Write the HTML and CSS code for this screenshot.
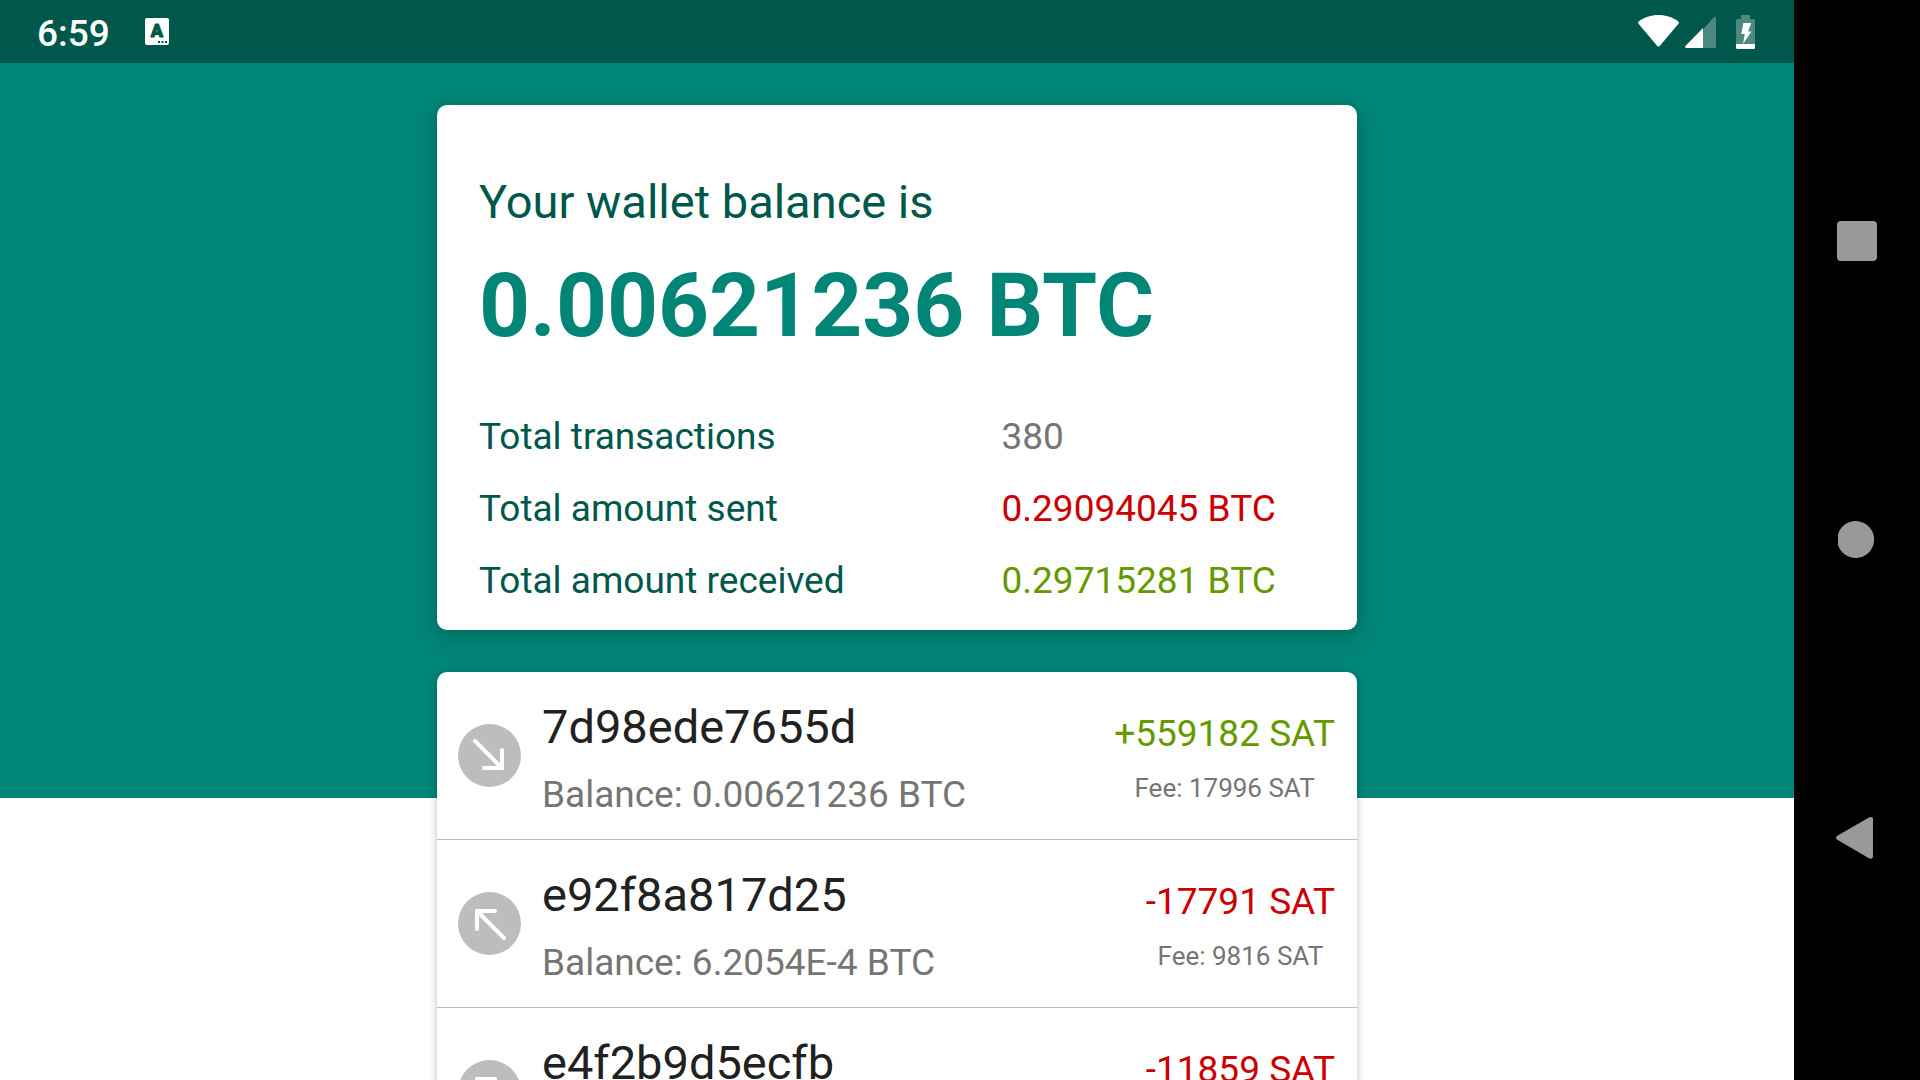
FILE: index.html
```html
<!DOCTYPE html>
<html lang="en">
<head>
<meta charset="utf-8">
<meta name="viewport" content="width=device-width, initial-scale=1">
<title>Wallet</title>
<link rel="stylesheet" href="styles.css">
</head>
<body>
<div class="device">
  <div class="screen">
    <header class="status-bar">
      <time class="clock">6:59</time>
      <svg class="notification" width="24" height="27" viewBox="0 0 24 27" aria-hidden="true">
        <rect width="24" height="27" rx="2" fill="#fff"/>
        <text class="notification-letter" x="12" y="19" text-anchor="middle">A</text>
        <path d="M13 23h2v2h-2zM16.500 23h2v2h-2zM20 23h2v2h-2z" fill="#00574b"/>
      </svg>
      <div class="indicators">
        <svg width="41" height="34" viewBox="0 0 41 34" role="img" aria-label="Wi-Fi">
          <path d="M1 6.200C6 2.500 13 0 20.500 0S35 2.500 40 6.200c1 .7 1.200 1.600.5 2.500L21.700 31c-.7.8-1.700.8-2.400 0L.5 8.700C-.2 7.800 0 6.900 1 6.200z" fill="#fff"/>
        </svg>
        <svg class="signal" width="31" height="34" viewBox="0 0 31 34" role="img" aria-label="Mobile signal">
          <path d="M18 14.500L28.600 2.600c1-1 2.400-.8 2.400.6V32c0 .7-.4 1-1 1H18z" fill="#fff" fill-opacity=".3"/>
          <path d="M18 13v20H1.500C0 33-.4 31.700.6 30.700z" fill="#fff"/>
        </svg>
        <svg width="19" height="34" viewBox="0 0 19 34" role="img" aria-label="Battery charging">
          <path d="M5 0h9v4h3.500c1 0 1.500.6 1.500 1.500V29H0V5.500C0 4.600.6 4 1.500 4H5z" fill="#fff" fill-opacity=".3"/>
          <path d="M0 29h19v3.500c0 .9-.5 1.500-1.500 1.500h-16C.6 34 0 33.400 0 32.500z" fill="#fff"/>
          <path d="M7.300 8h8L12 16.500h3.500L7 29l1.800-10H5.300z" fill="#fff"/>
        </svg>
      </div>
    </header>

    <main class="content">
      <section class="card summary">
        <h1 class="summary-title">Your wallet balance is</h1>
        <p class="summary-balance">0.00621236 BTC</p>
        <dl class="totals">
          <dt>Total transactions</dt>
          <dd>380</dd>
          <dt>Total amount sent</dt>
          <dd class="negative">0.29094045 BTC</dd>
          <dt>Total amount received</dt>
          <dd class="positive">0.29715281 BTC</dd>
        </dl>
      </section>

      <ul class="card transactions">
        <li class="transaction">
          <svg class="direction" width="63" height="63" viewBox="0 0 63 63" role="img" aria-label="Received">
            <circle cx="31.500" cy="31.500" r="31.500"/>
            <path d="M17 17l27 27M26 44h18V26"/>
          </svg>
          <div class="details">
            <h2 class="hash">7d98ede7655d</h2>
            <p class="balance">Balance: 0.00621236 BTC</p>
          </div>
          <div class="amounts">
            <p class="amount positive">+559182 SAT</p>
            <p class="fee">Fee: 17996 SAT</p>
          </div>
        </li>
        <li class="transaction">
          <svg class="direction" width="63" height="63" viewBox="0 0 63 63" role="img" aria-label="Sent">
            <circle cx="31.500" cy="31.500" r="31.500"/>
            <path d="M46 46L19 19M37 19H19v18"/>
          </svg>
          <div class="details">
            <h2 class="hash">e92f8a817d25</h2>
            <p class="balance">Balance: 6.2054E-4 BTC</p>
          </div>
          <div class="amounts">
            <p class="amount negative">-17791 SAT</p>
            <p class="fee">Fee: 9816 SAT</p>
          </div>
        </li>
        <li class="transaction">
          <svg class="direction" width="63" height="63" viewBox="0 0 63 63" role="img" aria-label="Sent">
            <circle cx="31.500" cy="31.500" r="31.500"/>
            <path d="M46 46L19 19M37 19H19v18"/>
          </svg>
          <div class="details">
            <h2 class="hash">e4f2b9d5ecfb</h2>
          </div>
          <div class="amounts">
            <p class="amount negative">-11859 SAT</p>
          </div>
        </li>
      </ul>
    </main>
  </div>

  <nav class="nav-bar" aria-label="System navigation">
    <button type="button" aria-label="Overview">
      <svg width="42" height="42" viewBox="0 0 42 42" aria-hidden="true"><rect x="1" y="1" width="40" height="40" rx="4"/></svg>
    </button>
    <button type="button" aria-label="Home">
      <svg width="42" height="42" viewBox="0 0 42 42" aria-hidden="true"><path d="M2 15A18.500 18.500 0 1 1 2 26z"/></svg>
    </button>
    <button type="button" aria-label="Back">
      <svg width="42" height="42" viewBox="0 0 42 42" aria-hidden="true"><path d="M1.300 17.800L32.500-.3C35-1.500 37-.9 37 1.500v36.500c0 2.500-2 3.400-4.500 2.100L1.300 21.700c-1.800-1.200-1.800-2.700 0-3.900z"/></svg>
    </button>
  </nav>
</div>
</body>
</html>
```
FILE: styles.css
```css
* {
  box-sizing: border-box;
}

body,
h1,
h2,
p,
ul,
dl,
dd {
  margin: 0;
}

body {
  font-family: Roboto, sans-serif;
  font-size: 37px;
  line-height: 43px;
  color: #757575;
  background: #fff;
}

.device {
  display: grid;
  grid-template-columns: minmax(0, 1fr) 126px;
  height: 100vh;
  overflow: hidden;
}

.screen {
  display: flex;
  flex-direction: column;
  min-height: 0;
}

/* Status bar */

.status-bar {
  display: flex;
  flex: none;
  align-items: center;
  height: 63px;
  padding: 0 39px 0 37px;
  color: #fff;
  background: #00574b;
}

.clock {
  padding-top: 3px;
  font-weight: 500;
}

.notification {
  margin-left: 35px;
}

.notification-letter {
  font-size: 18px;
  font-weight: 900;
  fill: #00574b;
  stroke: #00574b;
  stroke-width: 1;
  stroke-linejoin: round;
}

.indicators {
  display: flex;
  margin-left: auto;
}

.signal {
  margin: 0 20px 0 6px;
}

/* Content */

.content {
  display: flex;
  flex: 1;
  flex-direction: column;
  align-items: center;
  gap: 42px;
  min-height: 0;
  padding-top: 42px;
  overflow: hidden;
  background: linear-gradient(#008577, #008577) top / 100% 735px no-repeat;
}

.card {
  flex: none;
  width: 100%;
  max-width: 920px;
  background: #fff;
  border-radius: 10px;
}

.summary {
  padding: 69px 42px 28px;
  box-shadow: 0 8px 22px rgba(0, 0, 0, 0.14), 0 0 14px rgba(0, 0, 0, 0.1);
}

.summary-title {
  margin-bottom: 24px;
  font-size: 47px;
  font-weight: 400;
  line-height: 55px;
  color: #00574b;
}

.summary-balance {
  margin-bottom: 56px;
  font-size: 89px;
  font-weight: 700;
  line-height: 106px;
  color: #008577;
}

.totals {
  display: grid;
  grid-template-columns: 5fr 3fr;
  row-gap: 29px;
}

.totals dt {
  color: #00574b;
}

.positive {
  color: #690;
}

.negative {
  color: #c00;
}

/* Transaction list */

.transactions {
  padding: 0;
  list-style: none;
  box-shadow: 0 2px 8px rgba(0, 0, 0, 0.25);
}

.transaction {
  display: flex;
  gap: 21px;
  align-items: flex-start;
  min-height: 168px;
  padding: 0 22px 0 21px;
  border-bottom: 1px solid #bdbdbd;
}

.direction {
  flex: none;
  align-self: center;
}

.direction circle {
  fill: #bdbdbd;
}

.direction path {
  fill: none;
  stroke: #fff;
  stroke-width: 4;
  stroke-linecap: round;
}

.details {
  flex: 1;
  padding-top: 27px;
}

.hash {
  margin-bottom: 19px;
  font-size: 47px;
  font-weight: 400;
  line-height: 55px;
  color: #212121;
}

.amounts {
  padding-top: 40px;
  text-align: center;
}

.fee {
  margin-top: 18px;
  font-size: 26px;
  line-height: 31px;
}

/* System navigation */

.nav-bar {
  display: flex;
  flex-direction: column;
  align-items: center;
  justify-content: space-between;
  padding: 220px 0;
  background: #000;
}

.nav-bar button {
  display: flex;
  padding: 0;
  background: none;
  border: 0;
  cursor: pointer;
}

.nav-bar svg {
  overflow: visible;
  fill: #999;
}
```
